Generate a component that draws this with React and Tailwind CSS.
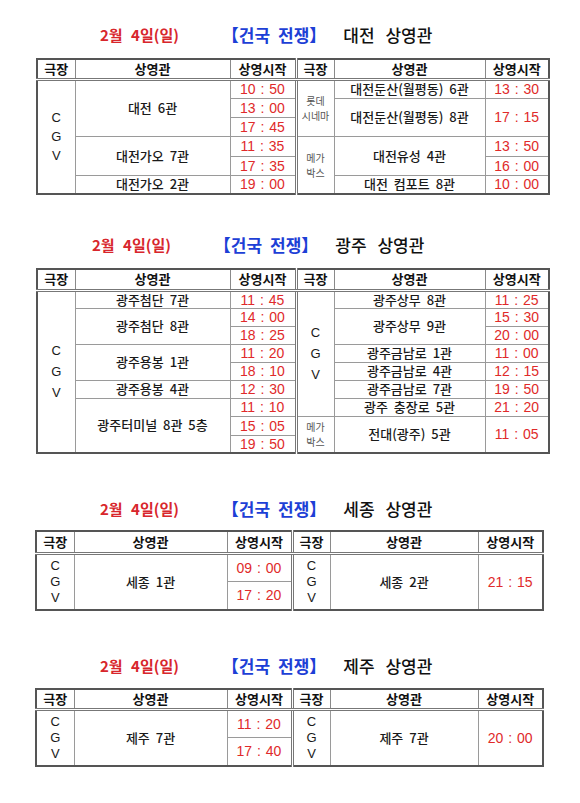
import React from "react";

const TH = "border border-[#8a8a8a] border-b-[3px] border-b-[#777] border-double p-0 text-center text-[13px] leading-[16px] font-bold text-[#111]";
const THM = "border border-[#8a8a8a] border-b-[3px] border-b-[#777] border-l-[3px] border-l-[#777] border-double p-0 text-center text-[13px] leading-[16px] font-bold text-[#111]";
const TD = "border border-[#9a9a9a] border-double p-0 text-center align-middle text-[13px] leading-[16px] font-medium text-[#1a1a1a] [word-spacing:3px]";
const TDM = "border border-[#9a9a9a] border-l-[3px] border-l-[#777] border-double p-0 text-center align-middle text-[13px] leading-[16px] font-medium text-[#1a1a1a]";
const TT = "border border-[#9a9a9a] border-double p-0 text-center align-middle font-['Liberation_Sans',sans-serif] text-[14px] leading-[16px] font-normal text-[#e02a2a] whitespace-pre [word-spacing:1px]";

function CGV({ gap }) {
  return (
    <div className={"flex flex-col items-center font-['Liberation_Sans',sans-serif] text-[13px] font-normal text-[#1a1a1a] " + gap}>
      <span>C</span>
      <span>G</span>
      <span>V</span>
    </div>
  );
}

function Small({ a, b }) {
  return (
    <div className="flex flex-col items-center text-[10px] leading-[15px] font-normal text-[#555]">
      <span>{a}</span>
      <span>{b}</span>
    </div>
  );
}

function Header({ h }) {
  return (
    <tr className={h}>
      <th className={TH}>극장</th>
      <th className={TH}>상영관</th>
      <th className={TH}>상영시작</th>
      <th className={THM}>극장</th>
      <th className={TH}>상영관</th>
      <th className={TH}>상영시작</th>
    </tr>
  );
}

function Cols({ big }) {
  return big ? (
    <colgroup>
      <col className="w-[38px]" />
      <col className="w-[155px]" />
      <col className="w-[66px]" />
      <col className="w-[38px]" />
      <col className="w-[151px]" />
      <col className="w-[64px]" />
    </colgroup>
  ) : (
    <colgroup>
      <col className="w-[38px]" />
      <col className="w-[153px]" />
      <col className="w-[65px]" />
      <col className="w-[38px]" />
      <col className="w-[148px]" />
      <col className="w-[65px]" />
    </colgroup>
  );
}

function t(s) {
  return s.replace(":", " : ");
}

function Title({ place, cls }) {
  return (
    <div className={"flex items-center h-[24px] " + cls}>
      <span className="text-[15px] font-bold text-[#d8262c] [word-spacing:5px]">2월 4일(일)</span>
      <span className="ml-[43px] text-[17px] font-bold text-[#1d3fd6] [word-spacing:4px]">【건국 전쟁】</span>
      <span className="ml-[17px] text-[17px] font-medium text-[#111] [word-spacing:7px]">{place} 상영관</span>
    </div>
  );
}

export default function App() {
  return (
    <div className="w-[580px] h-[803px] bg-white font-['Noto_Sans_CJK_KR','Noto_Sans',sans-serif] flex flex-col">
      {/* 대전 */}
      <Title place="대전" cls="mt-[23px] pl-[100px]" />
      <table className="ml-[36px] mt-[11px] w-[512px] table-fixed border-collapse border-2 border-[#555]">
        <Cols big />
        <tbody>
          <Header h="h-[20px]" />
          <tr className="h-[19px]">
            <td rowSpan={6} className={TD}><CGV gap="gap-[3px] leading-[16px]" /></td>
            <td rowSpan={3} className={TD}>대전 6관</td>
            <td className={TT}>{t("10:50")}</td>
            <td rowSpan={3} className={TDM}><Small a="롯데" b="시네마" /></td>
            <td className={TD}>대전둔산(월평동) 6관</td>
            <td className={TT}>{t("13:30")}</td>
          </tr>
          <tr className="h-[19px]">
            <td className={TT}>{t("13:00")}</td>
            <td rowSpan={2} className={TD}>대전둔산(월평동) 8관</td>
            <td rowSpan={2} className={TT}>{t("17:15")}</td>
          </tr>
          <tr className="h-[19px]">
            <td className={TT}>{t("17:45")}</td>
          </tr>
          <tr className="h-[20px]">
            <td rowSpan={2} className={TD}>대전가오 7관</td>
            <td className={TT}>{t("11:35")}</td>
            <td rowSpan={3} className={TDM}><Small a="메가" b="박스" /></td>
            <td rowSpan={2} className={TD}>대전유성 4관</td>
            <td className={TT}>{t("13:50")}</td>
          </tr>
          <tr className="h-[19px]">
            <td className={TT}>{t("17:35")}</td>
            <td className={TT}>{t("16:00")}</td>
          </tr>
          <tr className="h-[19px]">
            <td className={TD}>대전가오 2관</td>
            <td className={TT}>{t("19:00")}</td>
            <td className={TD}>대전 컴포트 8관</td>
            <td className={TT}>{t("10:00")}</td>
          </tr>
        </tbody>
      </table>

      {/* 광주 */}
      <Title place="광주" cls="mt-[38px] pl-[92px]" />
      <table className="ml-[36px] mt-[11px] w-[512px] table-fixed border-collapse border-2 border-[#555]">
        <Cols big />
        <tbody>
          <Header h="h-[21px]" />
          <tr className="h-[18px]">
            <td rowSpan={9} className={TD}><CGV gap="gap-[5px] leading-[16px]" /></td>
            <td className={TD}>광주첨단 7관</td>
            <td className={TT}>{t("11:45")}</td>
            <td rowSpan={7} className={TDM}><CGV gap="gap-[5px] leading-[16px]" /></td>
            <td className={TD}>광주상무 8관</td>
            <td className={TT}>{t("11:25")}</td>
          </tr>
          <tr className="h-[18px]">
            <td rowSpan={2} className={TD}>광주첨단 8관</td>
            <td className={TT}>{t("14:00")}</td>
            <td rowSpan={2} className={TD}>광주상무 9관</td>
            <td className={TT}>{t("15:30")}</td>
          </tr>
          <tr className="h-[18px]">
            <td className={TT}>{t("18:25")}</td>
            <td className={TT}>{t("20:00")}</td>
          </tr>
          <tr className="h-[18px]">
            <td rowSpan={2} className={TD}>광주용봉 1관</td>
            <td className={TT}>{t("11:20")}</td>
            <td className={TD}>광주금남로 1관</td>
            <td className={TT}>{t("11:00")}</td>
          </tr>
          <tr className="h-[18px]">
            <td className={TT}>{t("18:10")}</td>
            <td className={TD}>광주금남로 4관</td>
            <td className={TT}>{t("12:15")}</td>
          </tr>
          <tr className="h-[18px]">
            <td className={TD}>광주용봉 4관</td>
            <td className={TT}>{t("12:30")}</td>
            <td className={TD}>광주금남로 7관</td>
            <td className={TT}>{t("19:50")}</td>
          </tr>
          <tr className="h-[18px]">
            <td rowSpan={3} className={TD}>광주터미널 8관 5층</td>
            <td className={TT}>{t("11:10")}</td>
            <td className={TD}>광주 충장로 5관</td>
            <td className={TT}>{t("21:20")}</td>
          </tr>
          <tr className="h-[19px]">
            <td className={TT}>{t("15:05")}</td>
            <td rowSpan={2} className={TDM}><Small a="메가" b="박스" /></td>
            <td rowSpan={2} className={TD}>전대(광주) 5관</td>
            <td rowSpan={2} className={TT}>{t("11:05")}</td>
          </tr>
          <tr className="h-[18px]">
            <td className={TT}>{t("19:50")}</td>
          </tr>
        </tbody>
      </table>

      {/* 세종 */}
      <Title place="세종" cls="mt-[43px] pl-[100px]" />
      <table className="ml-[35px] mt-[9px] w-[508px] table-fixed border-collapse border-2 border-[#555]">
        <Cols />
        <tbody>
          <Header h="h-[22px]" />
          <tr className="h-[28px]">
            <td rowSpan={2} className={TD}><CGV gap="leading-[16px]" /></td>
            <td rowSpan={2} className={TD}>세종 1관</td>
            <td className={TT}>{t("09:00")}</td>
            <td rowSpan={2} className={TDM}><CGV gap="leading-[16px]" /></td>
            <td rowSpan={2} className={TD}>세종 2관</td>
            <td rowSpan={2} className={TT}>{t("21:15")}</td>
          </tr>
          <tr className="h-[29px]">
            <td className={TT}>{t("17:20")}</td>
          </tr>
        </tbody>
      </table>

      {/* 제주 */}
      <Title place="제주" cls="mt-[43px] pl-[100px]" />
      <table className="ml-[35px] mt-[10px] w-[508px] table-fixed border-collapse border-2 border-[#555]">
        <Cols />
        <tbody>
          <Header h="h-[20px]" />
          <tr className="h-[28px]">
            <td rowSpan={2} className={TD}><CGV gap="leading-[16px]" /></td>
            <td rowSpan={2} className={TD}>제주 7관</td>
            <td className={TT}>{t("11:20")}</td>
            <td rowSpan={2} className={TDM}><CGV gap="leading-[16px]" /></td>
            <td rowSpan={2} className={TD}>제주 7관</td>
            <td rowSpan={2} className={TT}>{t("20:00")}</td>
          </tr>
          <tr className="h-[29px]">
            <td className={TT}>{t("17:40")}</td>
          </tr>
        </tbody>
      </table>
    </div>
  );
}
